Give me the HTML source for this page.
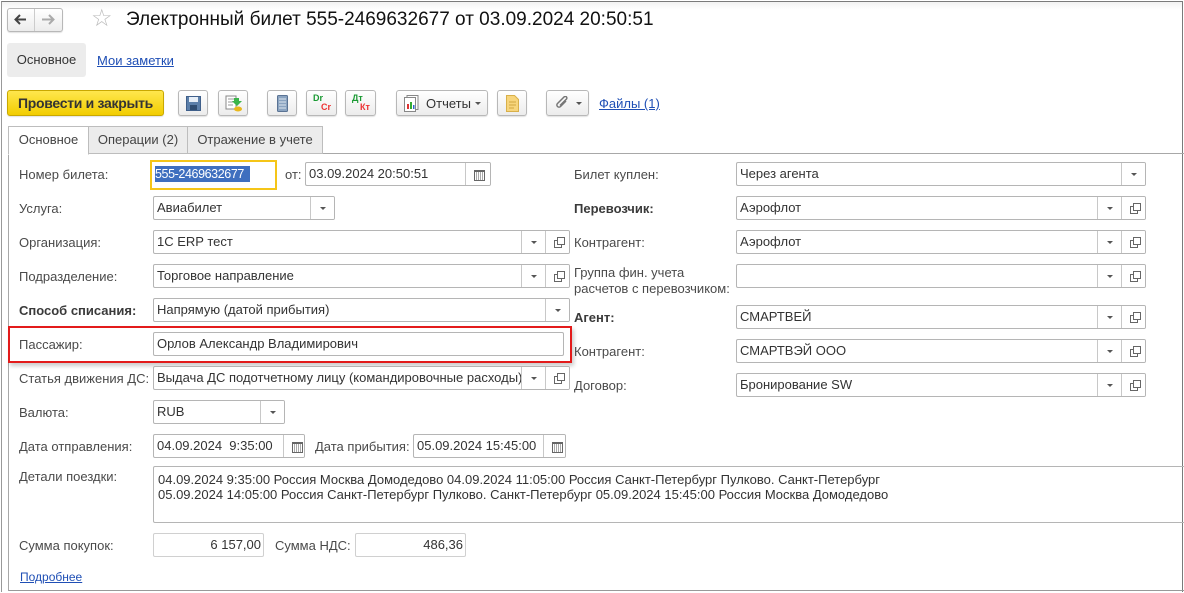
<!DOCTYPE html>
<html><head><meta charset="utf-8"><style>
*{box-sizing:border-box;margin:0;padding:0}
body{width:1184px;height:593px;background:#fff;font-family:"Liberation Sans",Arial,sans-serif;font-size:13px;color:#333;position:relative;overflow:hidden}
.a{position:absolute}
.frame{left:1px;top:1px;width:1182px;height:591px;border:1px solid #7a7a7a;border-bottom:none;border-left:1px solid #999}
.btn{position:absolute;height:26px;border:1px solid #b8b8b8;border-radius:3px;background:linear-gradient(#fff,#ececec);box-shadow:0 1px 1px rgba(0,0,0,.12)}
.lbl{position:absolute;color:#4a4a4a;font-size:13px;white-space:nowrap}
.b{font-weight:bold;color:#3a3a3a}
.in{position:absolute;height:24px;border:1px solid #b5b5b5;border-radius:2px;background:#fff;line-height:22px;padding-left:3px;color:#333;white-space:nowrap;overflow:hidden}
.dd{position:absolute;top:0;bottom:0;width:24px;border-left:1px solid #c8c8c8;background:#fff}
.dd:after{content:"";position:absolute;left:9px;top:10px;border-left:3px solid transparent;border-right:3px solid transparent;border-top:3px solid #555}
.op{position:absolute;top:0;bottom:0;width:24px;border-left:1px solid #c8c8c8;background:#fff}
.op:before{content:"";position:absolute;left:8px;top:9px;width:6px;height:6px;border:1px solid #666;background:#fff}
.op:after{content:"";position:absolute;left:11px;top:6px;width:6px;height:6px;border:1px solid #666;background:#fff}
.cal{position:absolute;top:0;bottom:0;width:25px;border-left:1px solid #c8c8c8;background:#fff}
.cal:after{content:"";position:absolute;left:8px;top:7px;width:9px;height:8px;border:1px solid #666;border-top:2px solid #666;background:repeating-linear-gradient(90deg,#fff 0 1px,#aaa 1px 2px)}
.lnk{color:#1f4fb5;text-decoration:underline}
.tab{position:absolute;top:126px;height:28px;border:1px solid #bdbdbd;background:#ececec;line-height:26px;text-align:center;color:#444}
</style></head><body>
<div class="a frame"></div>
<div class="a" style="left:2px;top:2px;width:1180px;height:8px;background:linear-gradient(#f2f2f2,#fff)"></div>
<!-- nav -->
<div class="btn" style="left:7px;top:8px;width:56px;height:24px"></div>
<div class="a" style="left:34px;top:9px;width:1px;height:22px;background:#ccc"></div>
<svg class="a" style="left:14px;top:14px" width="13" height="11"><path d="M1 5.5h11M6 1L1.5 5.5 6 10" stroke="#444" stroke-width="2" fill="none"/></svg>
<svg class="a" style="left:42px;top:14px" width="13" height="11"><path d="M0 5.5h11M7 1l4.5 4.5L7 10" stroke="#aaa" stroke-width="2" fill="none"/></svg>
<div class="a" style="left:91px;top:4px;font-size:24px;color:#bbb">☆</div>
<div class="a" style="left:126px;top:9px;font-size:19px;color:#111">Электронный билет 555-2469632677 от 03.09.2024 20:50:51</div>
<!-- secondary -->
<div class="a" style="left:7px;top:43px;width:79px;height:34px;background:#ececec;border-radius:3px;line-height:34px;text-align:center;color:#333">Основное</div>
<div class="a lnk" style="left:97px;top:53px">Мои заметки</div>
<!-- toolbar -->
<div class="btn" style="left:7px;top:90px;width:157px;background:linear-gradient(#ffe74d,#f2cd00);border-color:#c9a800;font-size:14px;text-align:center;line-height:24px;color:#333;font-weight:bold;letter-spacing:-0.3px">Провести и закрыть</div>
<div class="btn" style="left:178px;top:90px;width:30px"><svg class="a" style="left:7px;top:5px" width="15" height="15"><rect x="0.5" y="0.5" width="14" height="14" fill="#5b7faa" stroke="#3f5f8a"/><rect x="3" y="1" width="9" height="5" fill="#e6eef7"/><rect x="4" y="9" width="7" height="5" fill="#2f4d72"/></svg></div>
<div class="btn" style="left:218px;top:90px;width:30px"><svg class="a" style="left:6px;top:4px" width="18" height="17"><rect x="1" y="1" width="10" height="13" fill="#fff" stroke="#888"/><path d="M3 4h6M3 7h6M3 10h5" stroke="#999"/><path d="M9 3h5v3h3l-5 5-5-5h2z" fill="#3bb54a"/><ellipse cx="13" cy="14" rx="4" ry="2.5" fill="#e9b81c"/></svg></div>
<div class="btn" style="left:267px;top:90px;width:30px"><svg class="a" style="left:9px;top:4px" width="11" height="17"><rect x="0.5" y="0.5" width="10" height="16" rx="1" fill="#8aa3c0" stroke="#5a7394"/><path d="M2 4h7M2 7h7M2 10h7M2 13h7" stroke="#dfe7f0"/></svg></div>
<div class="btn" style="left:306px;top:90px;width:31px"><span class="a" style="left:6px;top:2px;font-size:9px;color:#1a9a33;font-weight:bold">Dr</span><span class="a" style="left:14px;top:11px;font-size:9px;color:#e33;font-weight:bold">Cr</span></div>
<div class="btn" style="left:345px;top:90px;width:31px"><span class="a" style="left:6px;top:2px;font-size:9px;color:#1a9a33;font-weight:bold">Дт</span><span class="a" style="left:14px;top:11px;font-size:9px;color:#e33;font-weight:bold">Кт</span></div>
<div class="btn" style="left:396px;top:90px;width:92px"><svg class="a" style="left:7px;top:4px" width="16" height="17"><rect x="3" y="0.5" width="11" height="14" fill="#fff" stroke="#888"/><rect x="0.5" y="2.5" width="11" height="14" fill="#fff" stroke="#888"/><rect x="3" y="9" width="2" height="5" fill="#d33"/><rect x="6" y="7" width="2" height="7" fill="#3a3"/><rect x="9" y="10" width="1.5" height="4" fill="#36c"/></svg><span class="a" style="left:29px;top:5px;color:#333">Отчеты</span><span class="a" style="left:78px;top:11px;border-left:3px solid transparent;border-right:3px solid transparent;border-top:3px solid #555"></span></div>
<div class="btn" style="left:497px;top:90px;width:30px"><svg class="a" style="left:8px;top:4px" width="13" height="17"><path d="M.5 .5h8l4 4v12H.5z" fill="#f7d57c" stroke="#d8b04a"/><path d="M3 7h7M3 10h7M3 13h5" stroke="#d2a640"/></svg></div>
<div class="btn" style="left:546px;top:90px;width:43px"><svg class="a" style="left:8px;top:5px" width="14" height="15"><path d="M11 5L5.5 10.5a2 2 0 0 1-3-3L9 1a1.5 1.5 0 0 1 2.5 2L5 9.5" stroke="#777" stroke-width="1.5" fill="none"/></svg><span class="a" style="left:29px;top:11px;border-left:3px solid transparent;border-right:3px solid transparent;border-top:3px solid #555"></span></div>
<div class="a lnk" style="left:599px;top:96px">Файлы (1)</div>
<!-- tabs -->
<div class="a" style="left:8px;top:153px;width:1176px;height:438px;border:1px solid #a8a8a8;border-right:none;border-bottom:1px solid #999"></div>
<div class="tab" style="left:8px;width:81px;background:#fff;border-bottom-color:#fff;height:29px">Основное</div>
<div class="tab" style="left:88px;width:100px">Операции (2)</div>
<div class="tab" style="left:187px;width:136px">Отражение в учете</div>
<!-- left column -->
<div class="lbl" style="left:19px;top:167px">Номер билета:</div>
<div class="a" style="left:150px;top:160px;width:127px;height:30px;border:2px solid #f5c518"></div>
<div class="a" style="left:155px;top:166px;width:95px;height:16px;background:#3f6fbf;color:#fff;line-height:16px;font-size:12.5px;white-space:nowrap;overflow:hidden;letter-spacing:-0.4px">555-2469632677</div>
<div class="lbl" style="left:285px;top:167px">от:</div>
<div class="in" style="left:305px;top:162px;width:186px">03.09.2024 20:50:51<div class="cal" style="right:0"></div></div>

<div class="lbl" style="left:19px;top:201px">Услуга:</div>
<div class="in" style="left:153px;top:196px;width:182px">Авиабилет<div class="dd" style="right:0"></div></div>

<div class="lbl" style="left:19px;top:235px">Организация:</div>
<div class="in" style="left:153px;top:230px;width:417px">1С ERP тест<div class="dd" style="right:24px"></div><div class="op" style="right:0"></div></div>

<div class="lbl" style="left:19px;top:269px">Подразделение:</div>
<div class="in" style="left:153px;top:264px;width:417px">Торговое направление<div class="dd" style="right:24px"></div><div class="op" style="right:0"></div></div>

<div class="lbl b" style="left:19px;top:303px">Способ списания:</div>
<div class="in" style="left:153px;top:298px;width:417px">Напрямую (датой прибытия)<div class="dd" style="right:0"></div></div>

<div class="a" style="left:8px;top:326px;width:564px;height:37px;border:2px solid #e31b1b;box-shadow:2px 3px 4px rgba(0,0,0,.2)"></div>
<div class="lbl" style="left:19px;top:337px">Пассажир:</div>
<div class="in" style="left:153px;top:332px;width:411px">Орлов Александр Владимирович</div>

<div class="lbl" style="left:19px;top:371px">Статья движения ДС:</div>
<div class="in" style="left:153px;top:366px;width:417px">Выдача ДС подотчетному лицу (командировочные расходы)<div class="dd" style="right:24px"></div><div class="op" style="right:0"></div></div>

<div class="lbl" style="left:19px;top:405px">Валюта:</div>
<div class="in" style="left:153px;top:400px;width:132px">RUB<div class="dd" style="right:0"></div></div>

<div class="lbl" style="left:19px;top:439px">Дата отправления:</div>
<div class="in" style="left:153px;top:434px;width:152px">04.09.2024&nbsp; 9:35:00<div class="cal" style="right:0;width:21px"></div></div>
<div class="lbl" style="left:315px;top:439px">Дата прибытия:</div>
<div class="in" style="left:413px;top:434px;width:153px">05.09.2024 15:45:00<div class="cal" style="right:0;width:22px"></div></div>

<div class="lbl" style="left:19px;top:469px">Детали поездки:</div>
<div class="a" style="left:153px;top:466px;width:1040px;height:57px;border:1px solid #b5b5b5;border-radius:2px;padding:5px 0 0 4px;line-height:15px;color:#333">04.09.2024 9:35:00 Россия Москва Домодедово 04.09.2024 11:05:00 Россия Санкт-Петербург Пулково. Санкт-Петербург<br>05.09.2024 14:05:00 Россия Санкт-Петербург Пулково. Санкт-Петербург 05.09.2024 15:45:00 Россия Москва Домодедово</div>

<div class="lbl" style="left:19px;top:538px">Сумма покупок:</div>
<div class="in" style="left:153px;top:533px;width:111px;text-align:right;padding-right:2px;border-color:#d0d0d0">6 157,00</div>
<div class="lbl" style="left:275px;top:538px">Сумма НДС:</div>
<div class="in" style="left:355px;top:533px;width:111px;text-align:right;padding-right:2px;border-color:#d0d0d0">486,36</div>
<div class="a lnk" style="left:20px;top:570px;font-size:12px">Подробнее</div>

<!-- right column -->
<div class="lbl" style="left:574px;top:167px">Билет куплен:</div>
<div class="in" style="left:736px;top:162px;width:410px">Через агента<div class="dd" style="right:0"></div></div>
<div class="lbl b" style="left:574px;top:201px">Перевозчик:</div>
<div class="in" style="left:736px;top:196px;width:410px">Аэрофлот<div class="dd" style="right:24px"></div><div class="op" style="right:0"></div></div>
<div class="lbl" style="left:574px;top:235px">Контрагент:</div>
<div class="in" style="left:736px;top:230px;width:410px">Аэрофлот<div class="dd" style="right:24px"></div><div class="op" style="right:0"></div></div>
<div class="lbl" style="left:574px;top:265px;line-height:16px">Группа фин. учета<br>расчетов с перевозчиком:</div>
<div class="in" style="left:736px;top:264px;width:410px"><div class="dd" style="right:24px"></div><div class="op" style="right:0"></div></div>
<div class="lbl b" style="left:574px;top:310px">Агент:</div>
<div class="in" style="left:736px;top:305px;width:410px">СМАРТВЕЙ<div class="dd" style="right:24px"></div><div class="op" style="right:0"></div></div>
<div class="lbl" style="left:574px;top:344px">Контрагент:</div>
<div class="in" style="left:736px;top:339px;width:410px">СМАРТВЭЙ ООО<div class="dd" style="right:24px"></div><div class="op" style="right:0"></div></div>
<div class="lbl" style="left:574px;top:378px">Договор:</div>
<div class="in" style="left:736px;top:373px;width:410px">Бронирование SW<div class="dd" style="right:24px"></div><div class="op" style="right:0"></div></div>
</body></html>
